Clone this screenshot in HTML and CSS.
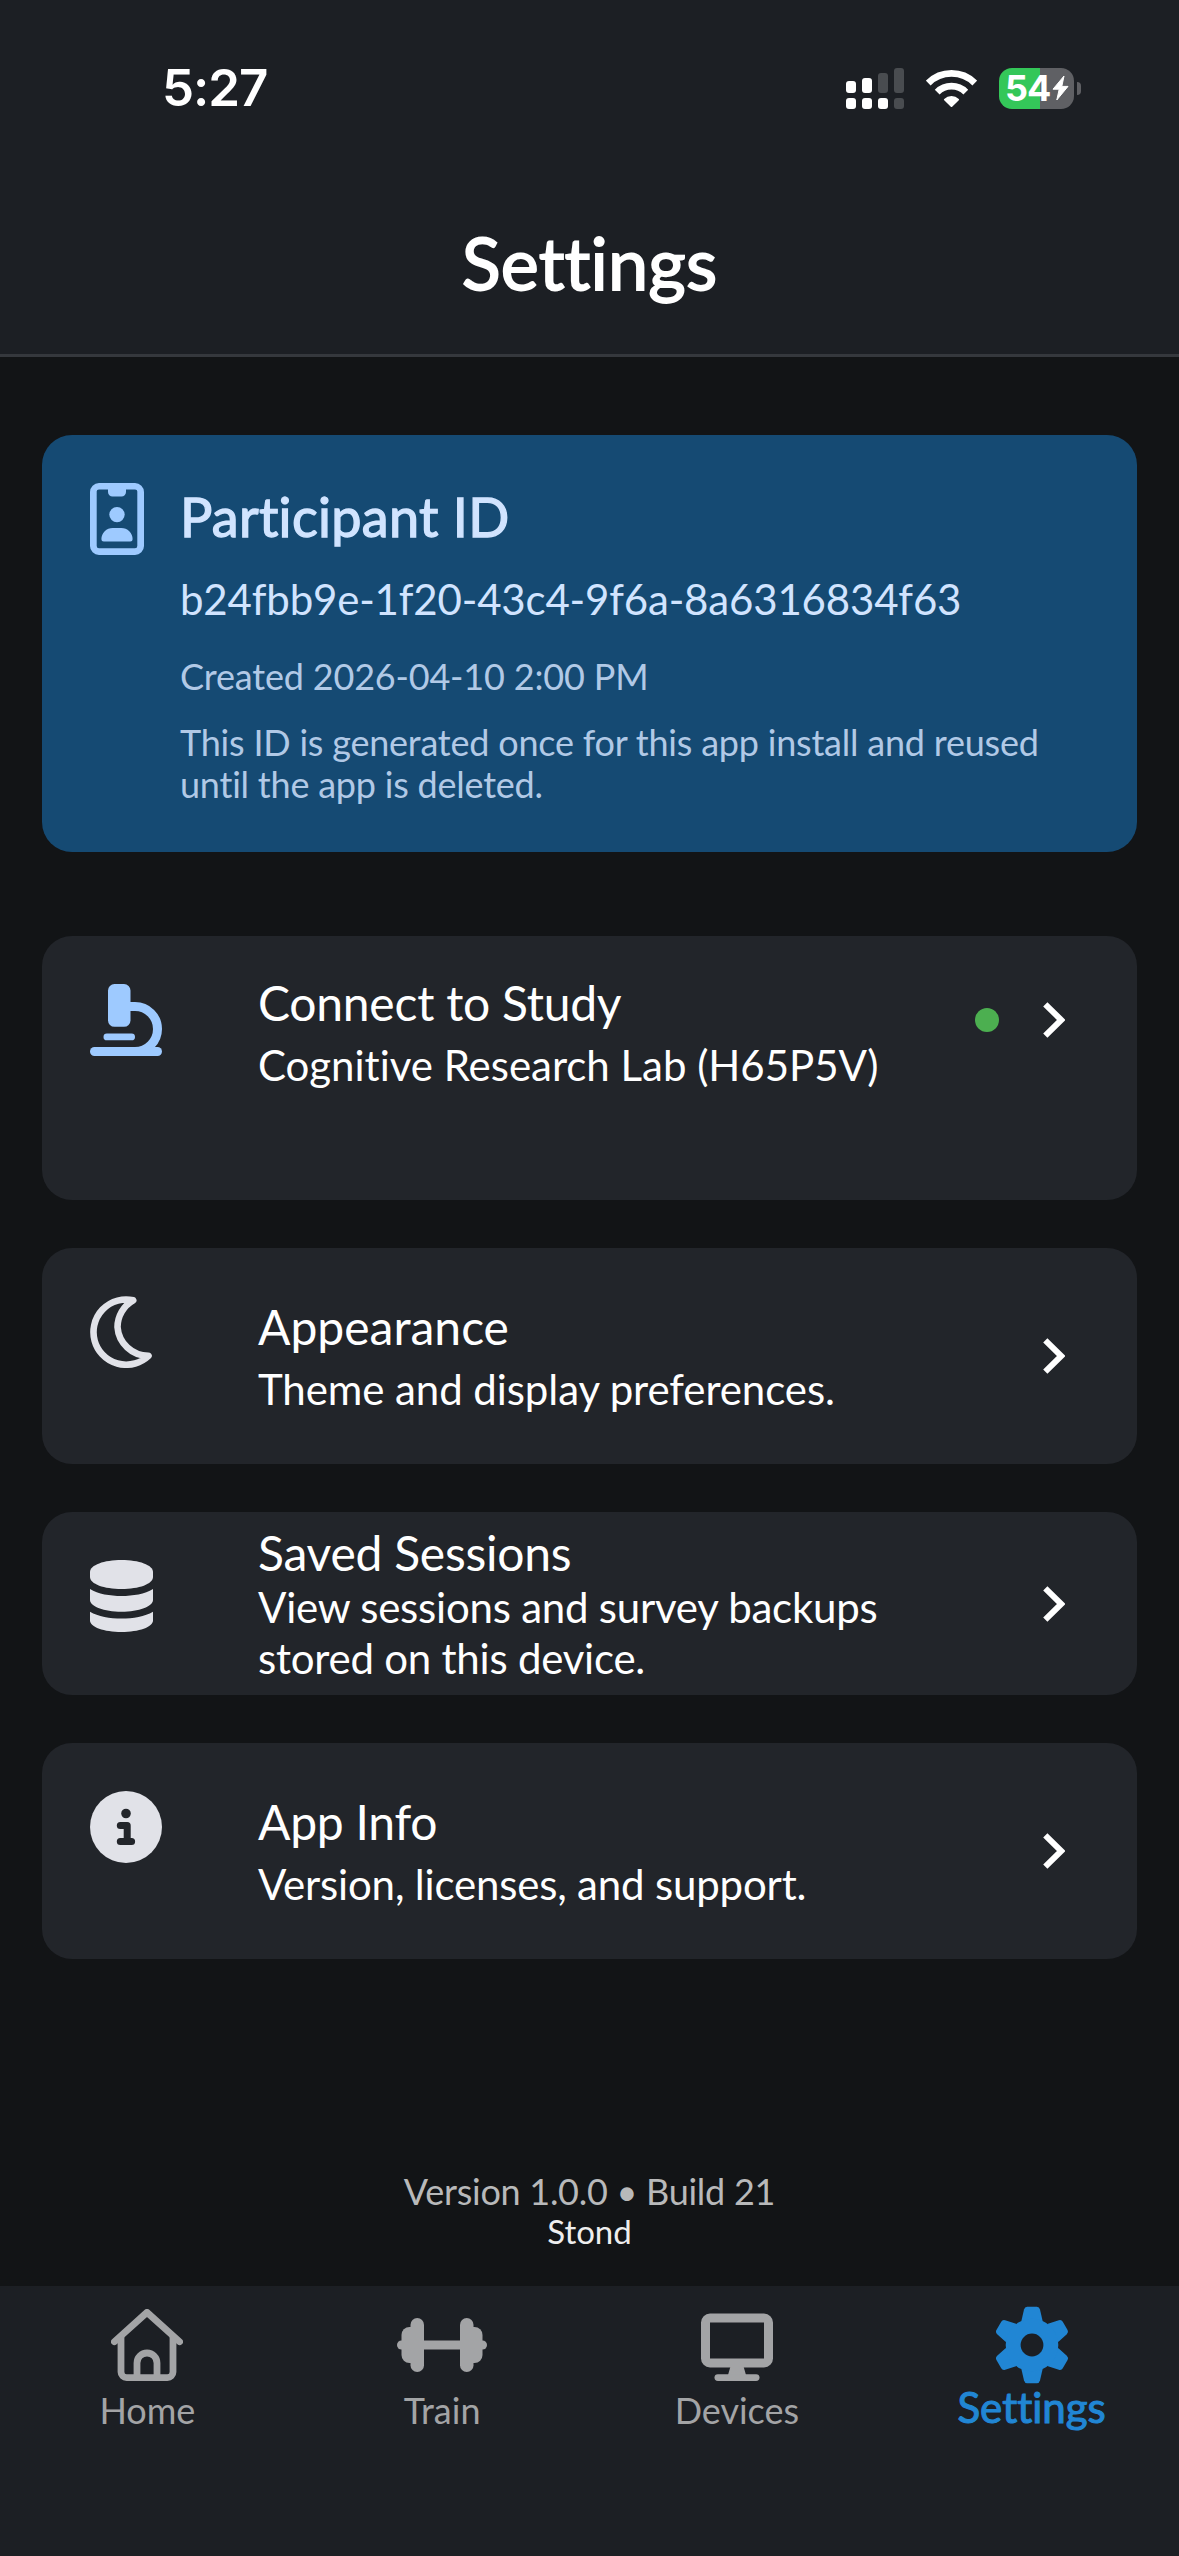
FILE: index.html
```html
<!DOCTYPE html>
<html lang="en">
<head>
<meta charset="utf-8">
<title>Settings</title>
<link rel="stylesheet" href="styles.css">
</head>
<body>
<div class="screen">
  <header class="header">
    <div class="status">
      <span class="status-time">5:27</span>
      <div class="status-icons">
        <svg class="signal" width="58" height="41" viewBox="0 0 58 41">
          <g fill="#fff">
            <rect x="0" y="13" width="10" height="12" rx="3"/><rect x="16" y="10" width="10" height="15" rx="3"/>
            <rect x="0" y="30" width="10" height="11" rx="3"/><rect x="16" y="30" width="10" height="11" rx="3"/><rect x="32" y="30" width="10" height="11" rx="3"/>
          </g>
          <g fill="#494c50">
            <rect x="32" y="5" width="10" height="20" rx="3"/><rect x="48" y="0" width="10" height="25" rx="3"/><rect x="48" y="30" width="10" height="11" rx="3"/>
          </g>
        </svg>
        <svg class="wifi" width="51" height="41" viewBox="0 0 51 41">
          <g fill="none" stroke="#fff" stroke-width="6.8">
            <path d="M2.2 15A33 33 0 0 1 48.8 15"/>
            <path d="M11.2 24.1A20.3 20.3 0 0 1 39.8 24.1"/>
          </g>
          <path d="M18.2 30.9a10.6 10.6 0 0 1 14.6 0q.7.7 0 1.4l-6.6 6.4q-.7.6-1.4 0l-6.6-6.4q-.7-.7 0-1.4z" fill="#fff"/>
        </svg>
        <div class="battery">
          <div class="battery-body">
            <span>54</span>
            <svg width="17" height="26" viewBox="0 0 17 26"><path d="M12 1L1 14.2h6.2L4.8 25 16 11.400H9.800z" fill="#fff" stroke="#fff" stroke-width="1" stroke-linejoin="round"/></svg>
          </div>
          <div class="battery-nub"></div>
        </div>
      </div>
    </div>
    <h1 class="title">Settings</h1>
  </header>

  <main class="content">
    <section class="participant">
      <svg class="icon-badge" width="54" height="72" viewBox="0 0 54 72" fill="#9ecaff">
        <path fill-rule="evenodd" d="M9 0H45a9 9 0 0 1 9 9V63a9 9 0 0 1-9 9H9a9 9 0 0 1-9-9V9a9 9 0 0 1 9-9zM18 6.500H9a2.300 2.300 0 0 0-2.300 2.500V63a2.300 2.300 0 0 0 2.300 2.300H45a2.300 2.300 0 0 0 2.300-2.300V9A2.300 2.300 0 0 0 45 6.500H36V9a4.500 4.500 0 0 1-4.500 4.500h-9A4.500 4.500 0 0 1 18 9z"/>
        <circle cx="27" cy="31.600" r="7.700"/>
        <path d="M11.400 56.300a11.300 11.300 0 0 1 11.300-11.300h8.600a11.300 11.300 0 0 1 11.300 11.300a2.300 2.300 0 0 1-2.300 2.300H13.700a2.300 2.300 0 0 1-2.300-2.300z"/>
      </svg>
      <div class="participant-text">
        <h2>Participant ID</h2>
        <p class="pid">b24fbb9e-1f20-43c4-9f6a-8a6316834f63</p>
        <p class="note created">Created 2026-04-10 2:00 PM</p>
        <p class="note">This ID is generated once for this app install and reused until the app is deleted.</p>
      </div>
    </section>

    <nav class="rows">
      <div class="row row-study">
        <div class="row-icon">
          <svg width="72" height="72" viewBox="0 0 72 72" fill="#9ecaff">
            <rect x="18" width="22.500" height="42.800" rx="6.500"/>
            <rect x="13.500" y="49.500" width="31.500" height="6.800" rx="3.400"/>
            <rect y="63" width="72" height="9" rx="4.500"/>
            <path d="M38 22.500H45A22.500 22.500 0 0 1 45 67.500" fill="none" stroke="#9ecaff" stroke-width="9"/>
          </svg>
        </div>
        <div class="row-text"><h3>Connect to Study</h3><p>Cognitive Research Lab (H65P5V)</p></div>
        <div class="row-end"><span class="dot"></span><svg class="chev" width="22" height="36" viewBox="0 0 22 36"><path d="M2.300 2.300L18.300 18 2.300 33.700"/></svg></div>
      </div>
      <div class="row row-appearance">
        <div class="row-icon">
          <svg width="72" height="72" viewBox="0 0 72 72" fill="none" stroke="#e1e2e8" stroke-width="6.600" stroke-linejoin="round">
            <path d="M43.200 4.300A32.600 32.600 0 1 0 58.500 59.800A31 31 0 0 1 27.500 31A31 31 0 0 1 43.200 4.300z"/>
          </svg>
        </div>
        <div class="row-text"><h3>Appearance</h3><p>Theme and display preferences.</p></div>
        <div class="row-end"><svg class="chev" width="22" height="36" viewBox="0 0 22 36"><path d="M2.300 2.300L18.300 18 2.300 33.700"/></svg></div>
      </div>
      <div class="row row-sessions">
        <div class="row-icon">
          <svg width="63" height="72" viewBox="0 0 63 72" fill="#e1e2e8">
            <path d="M0 12C0 5 14 0 31.500 0S63 5 63 12V17C63 24 49 29 31.500 29S0 24 0 17z"/>
            <path d="M0 29C8 34 20 36 31.500 36S55 34 63 29V40C63 46.500 49 51.700 31.500 51.700S0 46.500 0 40z"/>
            <path d="M0 51.700C8 56.500 20 58.500 31.500 58.500S55 56.500 63 51.700V60.500C63 67 49 72 31.500 72S0 67 0 60.500z"/>
          </svg>
        </div>
        <div class="row-text"><h3>Saved Sessions</h3><p>View sessions and survey backups stored on this device.</p></div>
        <div class="row-end"><svg class="chev" width="22" height="36" viewBox="0 0 22 36"><path d="M2.300 2.300L18.300 18 2.300 33.700"/></svg></div>
      </div>
      <div class="row row-info">
        <div class="row-icon">
          <svg width="72" height="72" viewBox="0 0 72 72">
            <circle cx="36" cy="36" r="36" fill="#e1e2e8"/>
            <circle cx="36" cy="22.500" r="4.800" fill="#22252a"/>
            <path d="M30.300 34.600H37.200V50.500M30.300 50.500H41.600" fill="none" stroke="#22252a" stroke-width="7" stroke-linecap="round" stroke-linejoin="round"/>
          </svg>
        </div>
        <div class="row-text"><h3>App Info</h3><p>Version, licenses, and support.</p></div>
        <div class="row-end"><svg class="chev" width="22" height="36" viewBox="0 0 22 36"><path d="M2.300 2.300L18.300 18 2.300 33.700"/></svg></div>
      </div>
    </nav>

    <footer class="about">
      <p class="version">Version 1.0.0 • Build 21</p>
      <p class="brand">Stond</p>
    </footer>
  </main>

  <nav class="tabs">
    <div class="tab">
      <svg width="72" height="72" viewBox="0 0 72 72" fill="none" stroke="#a3a4a6" stroke-width="6.800">
        <path d="M3.400 32.700L36 3.400 68.600 32.700" stroke-linecap="round" stroke-linejoin="round"/>
        <path d="M10 27V63a5.600 5.600 0 0 0 5.600 5.600H56.400a5.600 5.600 0 0 0 5.600-5.600V27"/>
        <path d="M26 68V54a10 10 0 0 1 10-10a10 10 0 0 1 10 10V68"/>
      </svg>
      <span>Home</span>
    </div>
    <div class="tab">
      <svg width="90" height="72" viewBox="0 0 90 72" fill="#a3a4a6">
        <rect y="31.500" width="90" height="9" rx="4.500"/>
        <rect x="4.500" y="18" width="20" height="36" rx="8"/>
        <rect x="65.500" y="18" width="20" height="36" rx="8"/>
        <rect x="13.500" y="9" width="13.500" height="54" rx="6.750"/>
        <rect x="63" y="9" width="13.500" height="54" rx="6.750"/>
      </svg>
      <span>Train</span>
    </div>
    <div class="tab">
      <svg width="72" height="72" viewBox="0 0 72 72" fill="#a3a4a6">
        <path fill-rule="evenodd" d="M9 4.500H63a9 9 0 0 1 9 9V49.500a9 9 0 0 1-9 9H9a9 9 0 0 1-9-9V13.500a9 9 0 0 1 9-9zM9 13.500V49.500H63V13.500z"/>
        <path d="M29.300 58L27 66H45L42.700 58z"/>
        <rect x="13.500" y="65.200" width="45" height="6.800" rx="3.400"/>
      </svg>
      <span>Devices</span>
    </div>
    <div class="tab tab-active">
      <svg width="78" height="78" viewBox="-39 -39 78 78" fill="#2186d4">
        <defs><path id="tooth" d="M-10.500-24.500L-8-35.600Q-7.300-38.300-4.800-38.300H4.800Q7.300-38.300 8-35.600L10.500-24.500 0 0z"/></defs>
        <use href="#tooth"/><use href="#tooth" transform="rotate(60)"/><use href="#tooth" transform="rotate(120)"/>
        <use href="#tooth" transform="rotate(180)"/><use href="#tooth" transform="rotate(240)"/><use href="#tooth" transform="rotate(300)"/>
        <circle r="26.300"/><circle r="11.400" fill="#1c1f24"/>
      </svg>
      <span>Settings</span>
    </div>
  </nav>
</div>
</body>
</html>
```
FILE: styles.css
```css
* { box-sizing: border-box; }
body { margin: 0; background: #121416; }
h1, h2, h3, p { margin: 0; font-weight: 400; }
svg { display: block; flex: none; }

.screen {
  width: 1179px;
  height: 2556px;
  display: flex;
  flex-direction: column;
  background: #121416;
  color: #fff;
  font-family: Lato, "Liberation Sans", sans-serif;
  font-variant-ligatures: none;
  overflow: hidden;
}

/* Header */
.header {
  height: 357px;
  flex: none;
  background: #1c1f24;
  border-bottom: 3px solid #35383d;
}
.status {
  height: 176px;
  padding: 0 98px 0 162px;
  display: flex;
  justify-content: space-between;
  align-items: center;
  font-family: Inter, "Liberation Sans", sans-serif;
}
.status-time { font-size: 51px; font-weight: 600; line-height: 60px; letter-spacing: -1px; }
.status-icons { display: flex; align-items: center; }
.wifi { margin-left: 22px; }
.battery { display: flex; align-items: center; gap: 3px; margin-left: 22px; }
.battery-body {
  width: 75px;
  height: 41px;
  border-radius: 13px;
  display: flex;
  align-items: center;
  gap: 2px;
  padding-left: 6px;
  background: linear-gradient(to right, #34c759 41px, #5f6064 41px);
}
.battery-body span { font-size: 36px; font-weight: 700; line-height: 41px; width: 45px; letter-spacing: -1px; }
.battery-nub { width: 4px; height: 13px; border-radius: 0 4px 4px 0; background: #5f6064; }
.title {
  text-align: center;
  font-size: 72px;
  line-height: 86px;
  margin-top: 43px;
  letter-spacing: 0.150px;
  -webkit-text-stroke: 1.800px #fff;
}

/* Content */
.content { flex: 1; padding: 78px 42px 0; display: flex; flex-direction: column; }
.participant {
  height: 417px;
  flex: none;
  display: flex;
  gap: 36px;
  padding: 48px 48px 0;
  border-radius: 30px;
  background: #154a73;
  color: #d1e4ff;
}
.participant-text { flex: 1; padding-top: 1px; }
.participant h2 { font-size: 54px; line-height: 65px; letter-spacing: 0.300px; -webkit-text-stroke: 1.300px #d1e4ff; }
.pid { font-size: 42px; line-height: 50px; margin-top: 25px; letter-spacing: -0.170px; }
.note { font-size: 36px; line-height: 42px; color: #b1c9e6; margin-top: 24px; letter-spacing: -0.220px; }
.created { margin-top: 31px; letter-spacing: -0.180px; }

.rows { margin-top: 84px; display: flex; flex-direction: column; gap: 48px; }
.row {
  display: flex;
  padding: 0 72px 0 48px;
  border-radius: 30px;
  background: #22252a;
  height: 216px;
}
.row-icon { width: 168px; padding-top: 48px; }
.row-text { width: 640px; display: flex; flex-direction: column; justify-content: center; gap: 8px; }
.row-text h3 { font-size: 48px; line-height: 58px; letter-spacing: -0.250px; }
.row-text p { font-size: 42px; line-height: 50.400px; letter-spacing: -0.180px; }
.row-end { flex: 1; display: flex; align-items: center; justify-content: flex-end; gap: 44px; }
.row-study { height: 264px; }
.row-study .row-text { justify-content: flex-start; padding-top: 38px; }
.row-study .row-text p { letter-spacing: -0.020px; }
.row-study .row-end { height: 168px; }
.row-appearance .row-text h3 { letter-spacing: 0; }
.row-appearance .row-text p { letter-spacing: -0.080px; }
.row-sessions { height: 183px; }
.row-sessions .row-text { gap: 0; }
.row-sessions .row-text p { letter-spacing: -0.230px; }
.dot { width: 24px; height: 24px; border-radius: 50%; background: #4caf50; }
.chev path { fill: none; stroke: #fff; stroke-width: 6; }

.about { margin-top: 211px; text-align: center; }
.version { font-size: 36px; line-height: 43px; color: #b8b9ba; letter-spacing: -0.270px; }
.brand { font-size: 33px; line-height: 37px; color: #eee; }

/* Tab bar */
.tabs { height: 270px; flex: none; background: #1c1f24; display: flex; }
.tab { flex: 1; display: flex; flex-direction: column; align-items: center; padding-top: 23px; color: #a3a4a6; }
.tab span { font-size: 36px; line-height: 43px; margin-top: 8px; }
.tab-active { color: #2186d4; padding-top: 20px; }
.tab-active span { font-size: 42px; line-height: 50px; margin-top: -2px; -webkit-text-stroke: 1.100px #2186d4; }
```
